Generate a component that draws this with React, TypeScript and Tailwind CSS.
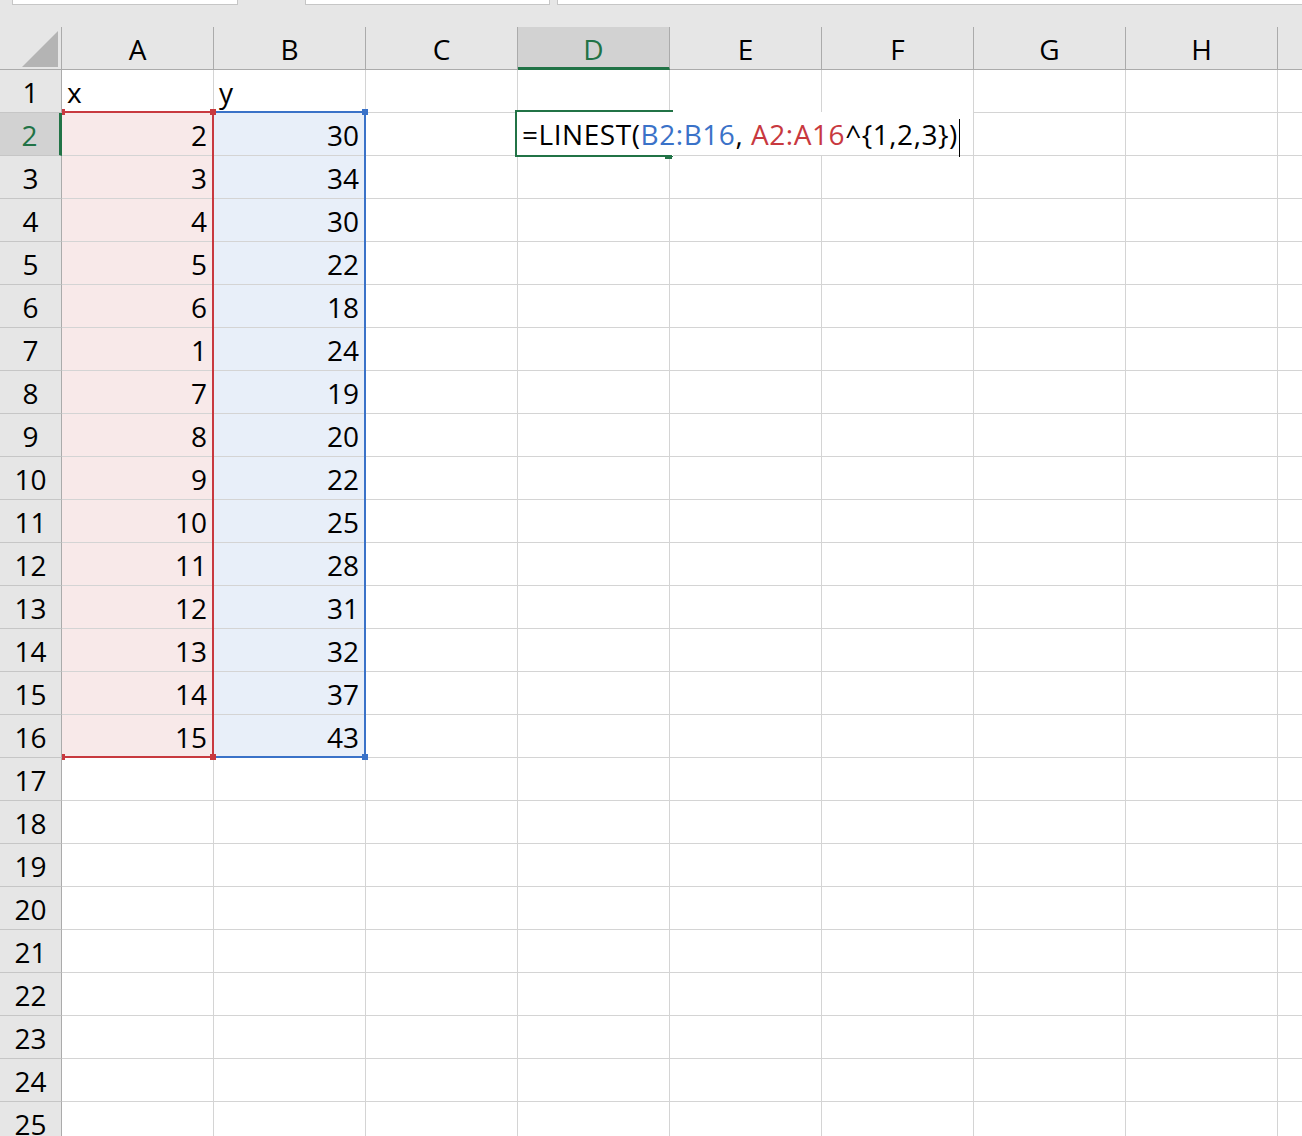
import React from "react";

// Column letters across the top of the sheet
const columns = ["A", "B", "C", "D", "E", "F", "G", "H"];

// x / y data in A2:B16
const xValues = [2, 3, 4, 5, 6, 1, 7, 8, 9, 10, 11, 12, 13, 14, 15];
const yValues = [30, 34, 30, 22, 18, 24, 19, 20, 22, 25, 28, 31, 32, 37, 43];

const rows = Array.from({ length: 25 }, (_, i) => i + 1);

function Cell({
  value,
  align = "right",
  fill = "",
}: {
  value?: string | number;
  align?: "left" | "right";
  fill?: string;
}) {
  return (
    <div
      className={`w-[152px] h-[43px] shrink-0 border-r border-b border-[#d4d4d4] leading-[44px] whitespace-nowrap ${
        align === "left" ? "text-left pl-[5px]" : "text-right pr-[6px]"
      } ${fill}`}
    >
      {value}
    </div>
  );
}

export default function App() {
  return (
    <div
      className="relative w-[1302px] h-[1136px] overflow-hidden bg-white text-black text-[28px]"
      style={{ fontFamily: '"Open Sans", "Noto Sans", sans-serif' }}
    >
      {/* Top strip (name box / formula bar edges) */}
      <div className="flex h-[27px] bg-[#e6e6e6]">
        <div className="ml-[12px] w-[226px] h-[5px] bg-white border border-t-0 border-[#c6c6c6]" />
        <div className="ml-[67px] w-[245px] h-[5px] bg-white border border-t-0 border-[#c6c6c6]" />
        <div className="ml-[7px] flex-1 h-[5px] bg-white border border-t-0 border-r-0 border-[#c6c6c6]" />
      </div>

      {/* Column headers */}
      <div className="flex h-[43px] bg-[#e6e6e6]">
        <div className="relative w-[62px] h-[43px] shrink-0 border-r border-b border-[#ababab]">
          <svg className="absolute left-[22px] top-[4px]" width="37" height="37" viewBox="0 0 37 37">
            <polygon points="36,0 36,36 0,36" fill="#b4b4b4" />
          </svg>
        </div>
        {columns.map((c) =>
          c === "D" ? (
            <div
              key={c}
              className="w-[152px] h-[43px] shrink-0 bg-[#d2d2d2] border-r border-[#ababab] border-b-[3px] border-b-[#217346] text-center leading-[44px] text-[#217346]"
            >
              {c}
            </div>
          ) : (
            <div
              key={c}
              className="w-[152px] h-[43px] shrink-0 border-r border-b border-[#ababab] text-center leading-[44px]"
            >
              {c}
            </div>
          )
        )}
        <div className="flex-1 h-[43px] border-b border-[#ababab]" />
      </div>

      {/* Grid rows */}
      {rows.map((r) => {
        const inData = r >= 2 && r <= 16;
        const selected = r === 2;
        return (
          <div key={r} className="flex h-[43px]">
            <div
              className={`w-[62px] h-[43px] shrink-0 border-b border-b-[#c6c6c6] text-center leading-[44px] ${
                selected
                  ? "bg-[#d2d2d2] text-[#217346] border-r-[3px] border-r-[#217346]"
                  : "bg-[#e6e6e6] border-r border-r-[#ababab]"
              }`}
            >
              {r}
            </div>
            {r === 1 ? (
              <>
                <Cell value="x" align="left" />
                <Cell value="y" align="left" />
              </>
            ) : inData ? (
              <>
                <Cell value={xValues[r - 2]} fill="bg-[#f8e9e9]" />
                <Cell value={yValues[r - 2]} fill="bg-[#e8eff9]" />
              </>
            ) : (
              <>
                <Cell />
                <Cell />
              </>
            )}
            <Cell />
            <Cell />
            <Cell />
            <Cell />
            <Cell />
            <Cell />
            <div className="flex-1 h-[43px] border-b border-[#d4d4d4]" />
          </div>
        );
      })}

      {/* Range highlight A2:A16 (red) */}
      <div className="absolute left-[62px] top-[111px] w-[152px] h-[2px] bg-[#c8393f]" />
      <div className="absolute left-[212px] top-[111px] w-[2px] h-[647px] bg-[#c8393f]" />
      <div className="absolute left-[62px] top-[756px] w-[152px] h-[2px] bg-[#c8393f]" />
      <div className="absolute left-[62px] top-[109px] w-[3px] h-[6px] bg-[#c8393f]" />
      <div className="absolute left-[62px] top-[754px] w-[3px] h-[6px] bg-[#c8393f]" />

      {/* Range highlight B2:B16 (blue) */}
      <div className="absolute left-[214px] top-[111px] w-[152px] h-[2px] bg-[#3a72c8]" />
      <div className="absolute left-[364px] top-[111px] w-[2px] h-[647px] bg-[#3a72c8]" />
      <div className="absolute left-[214px] top-[756px] w-[152px] h-[2px] bg-[#3a72c8]" />
      <div className="absolute left-[362px] top-[109px] w-[6px] h-[6px] bg-[#3a72c8]" />
      <div className="absolute left-[362px] top-[754px] w-[6px] h-[6px] bg-[#3a72c8]" />

      {/* corner handles of the red range sit on top of blue */}
      <div className="absolute left-[210px] top-[109px] w-[6px] h-[6px] bg-[#c8393f]" />
      <div className="absolute left-[210px] top-[754px] w-[6px] h-[6px] bg-[#c8393f]" />

      {/* Active cell D2 in edit mode */}
      <div className="absolute left-[515px] top-[110px] w-[158px] h-[47px] border-l-2 border-t-2 border-b-2 border-[#217346]" />
      <div className="absolute left-[671px] top-[153px] w-[2px] h-[3px] bg-white" />
      <div className="absolute left-[665px] top-[153px] w-[7px] h-[6px] bg-[#217346]" />
      <div className="absolute left-[517px] top-[112px] w-[456px] h-[43px] bg-white pl-[5px] leading-[44px] whitespace-nowrap tracking-[0.55px]">
        =LINEST(<span className="text-[#3a72c8]">B2:B16</span>,{" "}
        <span className="text-[#c8393f]">A2:A16</span>^{"{1,2,3}"})
        <span className="inline-block w-px h-[38px] bg-black align-middle ml-[1px]" />
      </div>
    </div>
  );
}
